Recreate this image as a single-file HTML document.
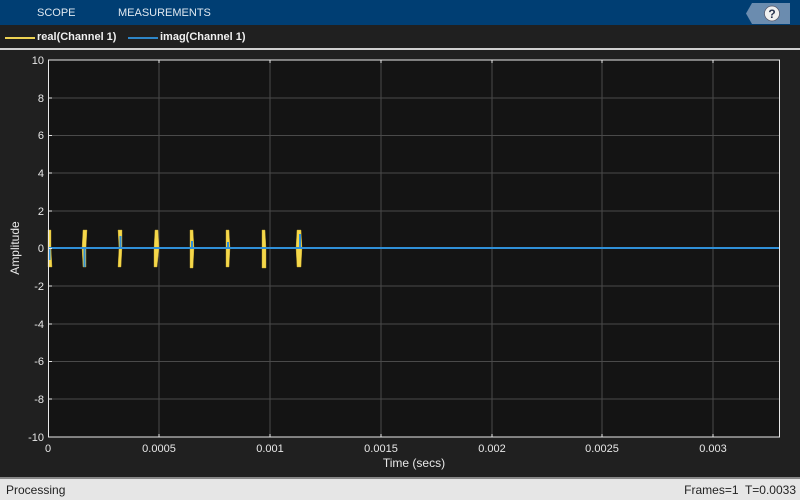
<!DOCTYPE html>
<html><head><meta charset="utf-8"><style>
html,body{margin:0;padding:0;width:800px;height:500px;overflow:hidden;background:#202020;font-family:"Liberation Sans",sans-serif}
.top{position:absolute;left:0;top:0;width:800px;height:25px;background:#003e73}
.top span{position:absolute;top:7px;font-size:11px;color:#dfe8f0}
.leg{position:absolute;left:0;top:25px;width:800px;height:25px;background:#202020;border-bottom:2px solid #d0d0d0;box-sizing:border-box}
.status{position:absolute;left:0;top:477px;width:800px;height:23px;background:#e6e6e6;border-top:2px solid #888;box-sizing:border-box;font-size:12px;color:#222}
</style></head><body>
<div class="top"><span style="left:37px">SCOPE</span><span style="left:118px">MEASUREMENTS</span>
<svg style="position:absolute;left:746px;top:3px" width="45" height="22"><polygon points="6,0 44,0 44,21 6,21 0,10.5" fill="#6b8caf"/><circle cx="26" cy="10.5" r="7.5" fill="#f0f0f0" stroke="#556" stroke-width="0.7"/><text x="26" y="15" font-size="12" font-weight="bold" text-anchor="middle" fill="#2a3550" font-family="Liberation Sans">?</text></svg></div>
<div class="leg">
<div style="position:absolute;left:5px;top:12px;width:30px;height:2px;background:#edd252"></div>
<span style="position:absolute;left:37px;top:6px;font-size:11px;color:#f0f0f0;font-weight:bold">real(Channel 1)</span>
<div style="position:absolute;left:128px;top:12px;width:30px;height:2px;background:#2e86c8"></div>
<span style="position:absolute;left:160px;top:6px;font-size:11px;color:#f0f0f0;font-weight:bold">imag(Channel 1)</span>
</div>
<svg style="position:absolute;left:0;top:50px" width="800" height="427" viewBox="0 50 800 427" font-family="Liberation Sans" font-size="11" fill="#e8e8e8">
<rect x="48.5" y="60" width="731" height="377" fill="#141414"/>
<g stroke="#4a4a4a" stroke-width="1">
<line x1="159" y1="60" x2="159" y2="437"/><line x1="270" y1="60" x2="270" y2="437"/><line x1="381" y1="60" x2="381" y2="437"/><line x1="492" y1="60" x2="492" y2="437"/><line x1="602" y1="60" x2="602" y2="437"/><line x1="713" y1="60" x2="713" y2="437"/>
<line x1="48" y1="98" x2="780" y2="98"/><line x1="48" y1="135.5" x2="780" y2="135.5"/><line x1="48" y1="173" x2="780" y2="173"/><line x1="48" y1="211" x2="780" y2="211"/><line x1="48" y1="248.5" x2="780" y2="248.5"/><line x1="48" y1="286" x2="780" y2="286"/><line x1="48" y1="324" x2="780" y2="324"/><line x1="48" y1="361.5" x2="780" y2="361.5"/><line x1="48" y1="399" x2="780" y2="399"/>
</g>
<g fill="#f5d84a" stroke="#c9a830" stroke-width="0.4">
<polygon points="48,230 51,230 51,248 52,267 48,267"/>
<polygon points="83,230 87,230 86,248 86,267 83,267 82,248"/>
<polygon points="118,230 122,230 122,248 121,267 118,267 119,248"/>
<polygon points="155,230 158,230 159,248 157,267 154,267 154,248"/>
<polygon points="190,230 193,230 194,248 193,268 190,268 190,248"/>
<polygon points="226,230 229,230 230,248 229,267 226,267 226,248"/>
<polygon points="262,230 265,230 266,248 266,268 262,268 262,248"/>
<polygon points="297,230 301,230 302,248 301,267 297,267 296,248"/>
</g>
<g stroke="#3090d8" stroke-width="2" fill="none">
<line x1="48" y1="248" x2="780" y2="248"/>
<line x1="49.5" y1="248" x2="49.5" y2="260"/><line x1="84.5" y1="248" x2="84.5" y2="267"/><line x1="120.5" y1="248" x2="120.5" y2="236"/><line x1="192" y1="248" x2="192" y2="241"/><line x1="228" y1="248" x2="228" y2="242"/><line x1="300" y1="248" x2="300" y2="234"/>
</g>
<g stroke="#e8e8e8" stroke-width="1">
<rect x="48.5" y="60" width="731" height="377" fill="none"/>
<path d="M159 60v3M270 60v3M381 60v3M492 60v3M602 60v3M713 60v3M159 437v-3M270 437v-3M381 437v-3M492 437v-3M602 437v-3M713 437v-3M48 98h4M48 135.5h4M48 173h4M48 211h4M48 248.5h4M48 286h4M48 324h4M48 361.5h4M48 399h4"/>
</g>
<g text-anchor="end">
<text x="44" y="64">10</text><text x="44" y="102">8</text><text x="44" y="139">6</text><text x="44" y="177">4</text><text x="44" y="215">2</text><text x="44" y="252">0</text><text x="44" y="290">-2</text><text x="44" y="328">-4</text><text x="44" y="365">-6</text><text x="44" y="403">-8</text><text x="44" y="441">-10</text>
</g>
<g text-anchor="middle">
<text x="48" y="452">0</text><text x="159" y="452">0.0005</text><text x="270" y="452">0.001</text><text x="381" y="452">0.0015</text><text x="492" y="452">0.002</text><text x="602" y="452">0.0025</text><text x="713" y="452">0.003</text>
<text x="414" y="467" font-size="12">Time (secs)</text>
<text transform="translate(19,248) rotate(-90)" font-size="12">Amplitude</text>
</g>
</svg>
<div class="status"><span style="position:absolute;left:6px;top:4px">Processing</span><span style="position:absolute;right:4px;top:4px">Frames=1&nbsp; T=0.0033</span></div>
</body></html>
